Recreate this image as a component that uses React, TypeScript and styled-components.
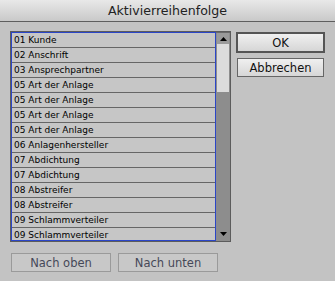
import styled, { createGlobalStyle } from 'styled-components';

const GlobalStyle = createGlobalStyle`
    html, body {
        margin: 0;
        padding: 0;
        background: #c3c3c3;
    }
    * {
        box-sizing: border-box;
    }
`;

const Dialog = styled.div`
    width: 335px;
    height: 281px;
    background: #c3c3c3;
    font-family: 'DejaVu Sans', 'Liberation Sans', sans-serif;
    overflow: hidden;
`;

const TitleBar = styled.div`
    height: 22px;
    display: flex;
    align-items: center;
    justify-content: center;
    background: linear-gradient(#e8e8e8, #c9c9c9);
    border-bottom: 1px solid #5e5e5e;
    font-size: 12.6px;
    color: #222;
    padding-bottom: 1px;
`;

const Body = styled.div`
    padding: 9px 10px 0 10px;
`;

const MainRow = styled.div`
    display: flex;
    gap: 5px;
    align-items: flex-start;
`;

const ListFrame = styled.div`
    width: 221px;
    height: 211px;
    display: flex;
    border: 1px solid #5c5c5c;
    background: #6a6a6a;
`;

const ListBox = styled.div`
    width: 205px;
    height: 209px;
    border: 1px solid #2b46c8;
    overflow: hidden;
    background: #c6c6c6;
`;

const Row = styled.div`
    height: 15px;
    border-bottom: 1px solid #666;
    padding-left: 2px;
    font-size: 9px;
    line-height: 14px;
    color: #000;
    white-space: nowrap;
`;

const Scrollbar = styled.div`
    width: 14px;
    height: 209px;
    display: flex;
    flex-direction: column;
    background: #8d8d8d;
    border-top: 1px solid #6a6a6a;
    padding-bottom: 2px;
`;

const ArrowButton = styled.div<{ $bg: string }>`
    height: 11px;
    display: flex;
    align-items: center;
    justify-content: center;
    background: ${({ $bg }) => $bg};
    margin: 0 1px;
`;

const Thumb = styled.div`
    height: 48px;
    background: #dcdcdc;
    margin: 0 1px;
`;

const Track = styled.div`
    flex: 1;
`;

const ButtonColumn = styled.div`
    display: flex;
    flex-direction: column;
    gap: 5px;
    padding-top: 1px;
`;

const DialogButton = styled.button<{ $default?: boolean }>`
    height: ${({ $default }) => ($default ? '21px' : '19px')};
    margin-left: ${({ $default }) => ($default ? '0' : '1px')};
    width: ${({ $default }) => ($default ? '89px' : '87px')};
    border: ${({ $default }) => ($default ? '2px solid #555' : '1px solid #666')};
    background: linear-gradient(#f0f0f0, #d6d6d6);
    font-family: 'DejaVu Sans', 'Liberation Sans', sans-serif;
    font-size: 11.5px;
    color: #111;
    padding: 0;
    border-radius: 0;
`;

const BottomRow = styled.div`
    display: flex;
    gap: 7px;
    padding: 11px 0 0 1px;
`;

const MoveButton = styled.button`
    width: 100px;
    height: 19px;
    border: 1px solid #9a9a9a;
    background: #c8c8c8;
    font-family: 'DejaVu Sans', 'Liberation Sans', sans-serif;
    font-size: 11.5px;
    color: #464858;
    padding: 0;
    border-radius: 0;
`;

const items = [
    '01 Kunde',
    '02 Anschrift',
    '03 Ansprechpartner',
    '05 Art der Anlage',
    '05 Art der Anlage',
    '05 Art der Anlage',
    '05 Art der Anlage',
    '06 Anlagenhersteller',
    '07 Abdichtung',
    '07 Abdichtung',
    '08 Abstreifer',
    '08 Abstreifer',
    '09 Schlammverteiler',
    '09 Schlammverteiler',
];

const Arrow = ({ up }: { up?: boolean }) => (
    <svg width="7" height="4" viewBox="0 0 7 4">
        <polygon points={up ? '3.5,0 7,4 0,4' : '0,0 7,0 3.5,4'} fill="#000" />
    </svg>
);

export default function App() {
    return (
        <Dialog>
            <GlobalStyle />
            <TitleBar>Aktivierreihenfolge</TitleBar>
            <Body>
                <MainRow>
                    <ListFrame>
                        <ListBox>
                            {items.map((item, i) => (
                                <Row key={i}>{item}</Row>
                            ))}
                        </ListBox>
                        <Scrollbar>
                            <ArrowButton $bg="#9a9a9a">
                                <Arrow up />
                            </ArrowButton>
                            <Thumb />
                            <Track />
                            <ArrowButton $bg="#8d8d8d">
                                <Arrow />
                            </ArrowButton>
                        </Scrollbar>
                    </ListFrame>
                    <ButtonColumn>
                        <DialogButton $default>OK</DialogButton>
                        <DialogButton>Abbrechen</DialogButton>
                    </ButtonColumn>
                </MainRow>
                <BottomRow>
                    <MoveButton>Nach oben</MoveButton>
                    <MoveButton>Nach unten</MoveButton>
                </BottomRow>
            </Body>
        </Dialog>
    );
}
